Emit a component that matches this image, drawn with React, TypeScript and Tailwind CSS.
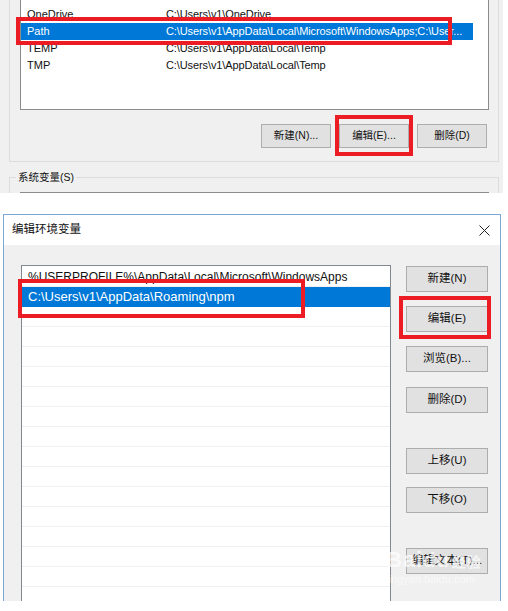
const FONT = "font-['Liberation_Sans','Noto_Sans_CJK_SC',sans-serif]";

const userVars = [
  { name: 'OneDrive', value: 'C:\\Users\\v1\\OneDrive' },
  { name: 'Path', value: 'C:\\Users\\v1\\AppData\\Local\\Microsoft\\WindowsApps;C:\\User...', selected: true },
  { name: 'TEMP', value: 'C:\\Users\\v1\\AppData\\Local\\Temp' },
  { name: 'TMP', value: 'C:\\Users\\v1\\AppData\\Local\\Temp' },
];

const pathItems = [
  '%USERPROFILE%\\AppData\\Local\\Microsoft\\WindowsApps',
  'C:\\Users\\v1\\AppData\\Roaming\\npm',
  '', '', '', '', '', '', '', '', '', '', '', '', '', '', '',
];

function WinButton({ label, className = '' }: { label: string; className?: string }) {
  return (
    <div
      className={`flex items-center justify-center whitespace-nowrap bg-[#e1e1e1] border border-[#adadad] text-[#111] ${className}`}
    >
      {label}
    </div>
  );
}

function RedBox({ className }: { className: string }) {
  return <div className={`absolute border-[4px] border-[#ec1c24] pointer-events-none ${className}`} />;
}

function UserVarsPanel() {
  return (
    <div className="relative h-[193px] w-[503px] bg-[#f0f0f0] text-[11px]">
      <div className="ml-[9px] w-[490px] h-[162px] border-x border-b border-[#dcdcdc] flex flex-col">
        <div className="ml-[10px] w-[469px] h-[110px] bg-white border-x border-b border-[#8c8c8c] pt-[6px]">
          {userVars.map(v => (
            <div
              key={v.name}
              className={`flex h-[17px] items-center w-[452px] overflow-hidden ${v.selected ? 'bg-[#0078d7] text-white' : 'text-[#111]'}`}
            >
              <span className="w-[145px] pl-[6px] shrink-0">{v.name}</span>
              <span className="whitespace-nowrap tracking-[-0.1px]">{v.value}</span>
            </div>
          ))}
        </div>
        <div className="flex justify-end gap-[8px] pr-[11px] mt-[14px] text-[10.5px]">
          <WinButton label="新建(N)..." className="w-[70px] h-[24px]" />
          <WinButton label="编辑(E)..." className="w-[70px] h-[24px]" />
          <WinButton label="删除(D)" className="w-[70px] h-[24px]" />
        </div>
      </div>
      <div className="relative ml-[9px] w-[490px] mt-[15px] border-t border-x border-[#dcdcdc] h-[16px] text-[10.5px]">
        <span className="absolute left-[6px] -top-[9px] bg-[#f0f0f0] px-[2px] text-[#111] leading-[17px]">系统变量(S)</span>
        <div className="ml-[10px] mt-[14px] w-[469px] h-[2px] border-t border-[#8c8c8c]" />
      </div>
      <RedBox className="left-[16px] top-[17px] w-[436px] h-[28px]" />
      <RedBox className="left-[335px] top-[115px] w-[78px] h-[41px]" />
    </div>
  );
}

function EditDialog() {
  return (
    <div className="relative ml-[3px] w-[498px] h-[387px] border border-[#7aa7d4] border-b-0 flex flex-col text-[12px]">
      <div className="h-[30px] bg-white flex items-center justify-between pl-[8px] pr-[8px] shrink-0">
        <span className="text-[11.5px] text-[#111]">编辑环境变量</span>
        <svg width="11" height="11" viewBox="0 0 11 11" className="mr-[2px]">
          <path d="M0.5 0.5 L10.5 10.5 M10.5 0.5 L0.5 10.5" stroke="#222" strokeWidth="1" />
        </svg>
      </div>
      <div className="flex-1 bg-[#f0f0f0] flex pl-[17px] pt-[20px] pr-[12px] overflow-hidden">
        <div className="w-[370px] bg-white border-x border-t border-[#828790] shrink-0 pt-[1px]">
          {pathItems.map((p, i) => (
            <div
              key={i}
              className={`h-[20px] flex items-center pl-[6px] whitespace-nowrap border-b ${
                i === 1 ? 'bg-[#0078d7] text-white border-[#0078d7] text-[13px]' : 'text-[#111] border-[#f0f0f0]'
              }`}
            >
              {p}
            </div>
          ))}
        </div>
        <div className="ml-[15px] flex flex-col w-[82px] pt-[1px] text-[11.5px]">
          <WinButton label="新建(N)" className="h-[26px]" />
          <WinButton label="编辑(E)" className="h-[26px] mt-[14px]" />
          <WinButton label="浏览(B)..." className="h-[26px] mt-[14px]" />
          <WinButton label="删除(D)" className="h-[26px] mt-[15px]" />
          <WinButton label="上移(U)" className="h-[26px] mt-[35px]" />
          <WinButton label="下移(O)" className="h-[26px] mt-[13px]" />
          <WinButton label="编辑文本(T)..." className="h-[26px] mt-[35px]" />
        </div>
      </div>
      <RedBox className="left-[14px] top-[64px] w-[287px] h-[39px]" />
      <RedBox className="left-[395px] top-[81px] w-[92px] h-[43px]" />
      <div className="absolute left-[382px] top-[334px] flex flex-col items-start leading-none text-white/70 pointer-events-none">
        <span className="text-[22px] font-bold tracking-[1px]">Bai<span className="text-[20px]">du</span><span className="text-[14px] ml-[2px]">经验</span></span>
        <span className="text-[11px] mt-[3px] text-white/60">jingyan.baidu.com</span>
      </div>
    </div>
  );
}

export default function App() {
  return (
    <div className={`w-[508px] h-[611px] bg-white overflow-hidden ${FONT}`}>
      <UserVarsPanel />
      <div className="h-[21px]" />
      <EditDialog />
    </div>
  );
}
